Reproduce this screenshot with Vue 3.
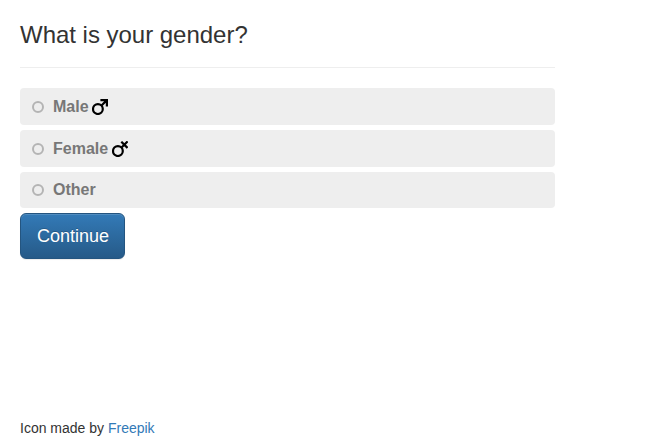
<script setup>
import { ref } from 'vue'

const selected = ref('')
const options = [
  { value: 'male', label: 'Male' },
  { value: 'female', label: 'Female' },
  { value: 'other', label: 'Other' },
]
</script>

<template>
  <main class="page">
    <form class="survey" @submit.prevent>
      <h1 class="title">What is your gender?</h1>
      <div class="options">
        <label v-for="o in options" :key="o.value" class="option" :class="o.value">
          <input v-model="selected" class="radio" type="radio" name="gender" :value="o.value" />
          <span class="text">{{ o.label }}</span>
          <svg v-if="o.value !== 'other'" class="icon" viewBox="0 0 16 16">
            <circle cx="5.9" cy="10.1" r="4.9" />
            <path v-if="o.value === 'male'" d="M9.3 6.7L14.6 1.4M8.4 1.1H14.9V7.6" />
            <path v-else d="M9.3 6.7L15.6.4M9.3.7L15.5 6.9" />
          </svg>
        </label>
      </div>
      <button class="continue" type="submit">Continue</button>
    </form>
    <footer class="credit">Icon made by <a class="link">Freepik</a></footer>
  </main>
</template>

<style>
body {
  background: #fff;
  overflow: hidden;
}
</style>

<style scoped>
.page {
  box-sizing: border-box;
  height: 436px;
  padding: 0 20px;
  display: flex;
  flex-direction: column;
  justify-content: space-between;
  font: 14px/20px "Liberation Sans", Arial, sans-serif;
  color: #333;
}
.survey {
  width: 535px;
}
.title {
  box-sizing: border-box;
  height: 68px;
  margin: 0 0 20px;
  padding-top: 21px;
  border-bottom: 1px solid #eee;
  font-size: 24px;
  font-weight: 400;
  line-height: 27px;
  letter-spacing: -0.02px;
}
.options {
  display: flex;
  flex-direction: column;
  gap: 5px;
  margin-bottom: 5px;
}
.option {
  box-sizing: border-box;
  height: 37px;
  padding: 0 12px;
  display: flex;
  align-items: center;
  border-radius: 4px;
  background: #eee;
  color: #777;
  font-size: 16px;
  font-weight: 700;
  line-height: 22px;
}
.other {
  height: 36px;
}
.radio {
  appearance: none;
  box-sizing: border-box;
  width: 12px;
  height: 12px;
  margin: 0 9px 0 0;
  border: 2px solid #b4b4b4;
  border-radius: 50%;
}
.radio:checked {
  background: #777;
}
.icon {
  width: 16px;
  height: 16px;
  margin-left: 4px;
  fill: none;
  stroke: #000;
  stroke-width: 2.2;
}
.male .icon {
  margin-left: 3.3px;
}
.continue {
  display: block;
  box-sizing: border-box;
  width: 105px;
  height: 46px;
  padding: 0 0 0 1px;
  border: 1px solid #245580;
  border-radius: 6px;
  background: linear-gradient(#337ab7, #265a88);
  box-shadow: inset 0 1px 0 rgba(255, 255, 255, 0.15), 0 1px 1px rgba(0, 0, 0, 0.075);
  color: #fff;
  font: 18px/24px "Liberation Sans", Arial, sans-serif;
  text-shadow: 0 -1px 0 rgba(0, 0, 0, 0.2);
}
.credit {
  height: 18px;
}
.link {
  color: #337ab7;
}
</style>
